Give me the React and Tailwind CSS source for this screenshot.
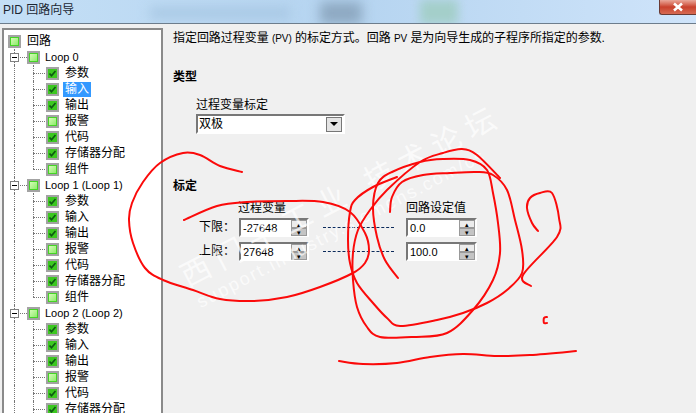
const FONT = { fontFamily: '"Liberation Sans","Noto Sans CJK SC",sans-serif' };

function smooth(pts) {
  let d = `M${pts[0][0]} ${pts[0][1]}`;
  for (let i = 0; i < pts.length - 1; i++) {
    const p0 = pts[i - 1] || pts[i];
    const p1 = pts[i];
    const p2 = pts[i + 1];
    const p3 = pts[i + 2] || p2;
    const c1x = p1[0] + (p2[0] - p0[0]) / 6;
    const c1y = p1[1] + (p2[1] - p0[1]) / 6;
    const c2x = p2[0] - (p3[0] - p1[0]) / 6;
    const c2y = p2[1] - (p3[1] - p1[1]) / 6;
    d += ` C${c1x.toFixed(1)} ${c1y.toFixed(1)} ${c2x.toFixed(1)} ${c2y.toFixed(1)} ${p2[0]} ${p2[1]}`;
  }
  return d;
}

const STROKES = [
  [[242,172],[220,166],[200,155],[183,153],[160,163],[143,182],[132,203],[129,220],[133,243],[145,268],[163,280],[193,290],[220,299],[253,301],[287,297],[320,287],[353,273],[365,263],[369,250],[365,233],[350,212],[323,202],[287,201],[247,202],[217,206],[184,220]],
  [[390,212],[392,197],[402,182],[423,175],[450,173],[477,172],[493,175],[507,190],[515,220],[522,250],[522,273],[507,290],[487,303],[463,313],[437,320],[400,326],[387,318],[373,303],[357,283],[350,263],[348,240],[350,212],[355,200],[373,187],[397,177]],
  [[398,278],[385,260],[377,237],[373,207],[378,183],[392,172],[420,162],[443,159],[470,160],[487,170],[493,193],[498,223],[500,253],[493,280],[473,310],[447,333],[413,337],[380,337],[367,327],[357,307],[353,280],[353,253],[358,230],[370,210],[387,190],[420,162],[443,153],[462,149],[477,155],[500,178]],
  [[538,231],[532,223],[527,208],[530,198],[540,193],[552,193],[559,218],[557,237],[523,275],[531,286]],
  [[547,317],[544,318],[544,323],[547,323]],
  [[339,361],[363,364],[397,363],[430,357],[463,354],[497,356],[530,355],[576,351]],
];

function Box({ checked }) {
  return (
    <span className="flex h-[13px] w-[13px] shrink-0 items-center justify-center border-2 border-[#a3a3a3] bg-white">
      <span className="flex h-[9px] w-[9px] items-center justify-center border border-[#45d426] bg-gradient-to-br from-[#d4fbb6] to-[#8cec68]">
        {checked && (
          <svg className="shrink-0" width="9" height="9" viewBox="0 0 9 9">
            <rect width="9" height="9" fill="#3cc820" />
            <path d="M1.5 4.5 L3.5 6.8 L7.5 2" fill="none" stroke="#0e5a14" strokeWidth="1.7" />
          </svg>
        )}
      </span>
    </span>
  );
}

function Guide({ kind }) {
  return (
    <span className="relative h-4 w-[19px] shrink-0">
      <span className={`absolute left-[6px] top-0 border-l border-dotted border-[#777] ${kind === "last" ? "h-2" : "h-4"}`} />
      {(kind === "branch" || kind === "last") && (
        <span className="absolute left-[6px] top-2 w-[12px] border-t border-dotted border-[#777]" />
      )}
    </span>
  );
}

function Leaf({ label, checked, selected, last }) {
  return (
    <div className="flex h-4 items-center">
      <Guide kind="line" />
      <Guide kind={last ? "last" : "branch"} />
      <Box checked={checked} />
      <span className={`ml-[4px] h-[15px] px-[2px] text-[12px] leading-[15px] ${selected ? "bg-[#3399ff] text-white" : "text-black"}`}>{label}</span>
    </div>
  );
}

function LoopHead({ label }) {
  return (
    <div className="flex h-4 items-center">
      <span className="relative flex h-4 w-[19px] shrink-0 items-center">
        <span className="absolute left-[6px] top-0 h-4 border-l border-dotted border-[#777]" />
        <span className="relative ml-[2px] flex h-[9px] w-[9px] items-center justify-center border border-[#808080] bg-white">
          <span className="h-px w-[5px] bg-black" />
        </span>
        <span className="ml-px w-[7px] border-t border-dotted border-[#777]" />
      </span>
      <Box />
      <span className="ml-[5px] text-[11px] leading-[15px] text-black">{label}</span>
    </div>
  );
}

function Loop({ label, selectedInput }) {
  return (
    <>
      <LoopHead label={label} />
      <Leaf label="参数" checked />
      <Leaf label="输入" checked selected={selectedInput} />
      <Leaf label="输出" checked />
      <Leaf label="报警" />
      <Leaf label="代码" checked />
      <Leaf label="存储器分配" checked />
      <Leaf label="组件" last />
    </>
  );
}

function Spin({ value }) {
  return (
    <div className="flex h-[19px] w-full border-2 border-b-white border-r-white border-l-[#777] border-t-[#777] bg-white">
      <span className="flex-1 pl-[2px] text-[11px] leading-[17px] text-black">{value}</span>
      <span className="flex w-[16px] flex-col">
        <span className="flex h-[8px] items-center justify-center border border-[#999] bg-[#ececec] text-[7px] leading-none text-black">▴</span>
        <span className="flex h-[8px] items-center justify-center border border-[#999] bg-[#c4c4c4] text-[7px] leading-none text-black">▾</span>
      </span>
    </div>
  );
}

function Dash() {
  return <span className="w-[71px] border-t border-dashed border-[#0b2a5a]" />;
}

export default function App() {
  return (
    <div style={FONT} className="relative flex h-[413px] w-[696px] flex-col overflow-hidden bg-[#f0f0f0]">
      <div className="relative flex h-6 shrink-0 items-start justify-between overflow-hidden border-b border-[#6d7d8c] bg-gradient-to-r from-[#c4dff6] via-[#b5d4f0] to-[#cfe4fa]">
        <span className="absolute left-[320px] top-[2px] h-[22px] w-[42px] bg-[#8ea9c2] blur-[6px]" />
        <span className="absolute left-[420px] top-0 h-6 w-[38px] bg-[#a4cfca] blur-[5px]" />
        <span className="absolute left-[150px] top-[8px] h-[10px] w-[140px] bg-[#a6c6e2] blur-[6px]" />
        <span className="relative pl-[3px] pt-[3px] text-[12px] leading-[15px] text-[#1c2733]">PID 回路向导</span>
        <span className="relative flex h-[15px] w-[37px] items-center justify-center rounded-bl-[3px] border border-t-0 border-r-0 border-[#6a3a33] bg-gradient-to-b from-[#e9a79a] via-[#c9402c] to-[#d66a52]">
          <svg width="12" height="10" viewBox="0 0 12 10">
            <path d="M2 1.5 L10 8.5 M10 1.5 L2 8.5" stroke="#fff" strokeWidth="2.6" />
          </svg>
        </span>
      </div>

      <div className="flex min-h-0 flex-1">
        <div className="ml-[2px] mt-[4px] w-[161px] shrink-0 overflow-hidden border-l-2 border-t-2 border-r-2 border-[#8a8a8a] bg-white pt-[3px] pl-[4px]">
          <div className="flex h-4 items-center">
            <Box />
            <span className="ml-[6px] text-[12px] leading-[15px] text-black">回路</span>
          </div>
          <Loop label="Loop 0" selectedInput />
          <Loop label="Loop 1 (Loop 1)" />
          <Loop label="Loop 2 (Loop 2)" />
        </div>

        <div className="flex-1 pl-[10px] pt-[7px] text-[12px] text-black">
          <p className="tracking-[-0.05px] leading-[15px]">
            指定回路过程变量 <span className="text-[10px]">(PV)</span> 的标定方式。回路 <span className="text-[10px]">PV</span> 是为向导生成的子程序所指定的参数.
          </p>

          <p className="mt-[24px] font-bold leading-[15px]">类型</p>
          <div className="ml-[23px] mt-[13px] w-[149px]">
            <p className="leading-[15px]">过程变量标定</p>
            <div className="mt-[1px] flex h-[20px] items-center border-2 border-b-white border-r-white border-l-[#777] border-t-[#777] bg-white pr-[1px]">
              <span className="flex-1 pl-[1px] leading-none">双极</span>
              <span className="flex h-[15px] w-[16px] items-center justify-center border border-[#777] bg-[#e4e4e4]">
                <span className="h-0 w-0 border-x-[4px] border-t-[4px] border-x-transparent border-t-black" />
              </span>
            </div>
          </div>

          <p className="mt-[45px] font-bold leading-[15px]">标定</p>

          <div className="ml-[26px] mt-[5px] grid grid-cols-[40px_70px_14px_71px_12px_71px] grid-rows-[14px_19px_19px] gap-y-[5px] text-[12px]">
            <span />
            <span className="-ml-px mt-[2px] leading-[15px]">过程变量</span>
            <span />
            <span />
            <span />
            <span className="mt-[2px] whitespace-nowrap leading-[15px]">回路设定值</span>

            <span className="leading-[19px]">下限：</span>
            <Spin value="-27648" />
            <span />
            <span className="flex items-center"><Dash /></span>
            <span />
            <Spin value="0.0" />

            <span className="leading-[19px]">上限：</span>
            <Spin value="27648" />
            <span />
            <span className="flex items-center"><Dash /></span>
            <span />
            <Spin value="100.0" />
          </div>
        </div>
      </div>

      <div className="pointer-events-none absolute left-[183px] top-[264px] origin-left -rotate-[27.5deg] whitespace-nowrap text-[30px] leading-none tracking-[8px] text-white/70">西门子工业 技术论坛</div>
      <div className="pointer-events-none absolute left-[198px] top-[294px] origin-left -rotate-[27.5deg] whitespace-nowrap text-[18px] leading-none tracking-[2px] text-white/70">support.industry.siemens.com/cs</div>

      <svg className="pointer-events-none absolute left-0 top-0" width="696" height="413" viewBox="0 0 696 413">
        {STROKES.map((p, i) => (
          <path key={i} d={smooth(p)} fill="none" stroke="#fb0a0a" strokeWidth="2" strokeLinecap="round" strokeLinejoin="round" />
        ))}
      </svg>
    </div>
  );
}
